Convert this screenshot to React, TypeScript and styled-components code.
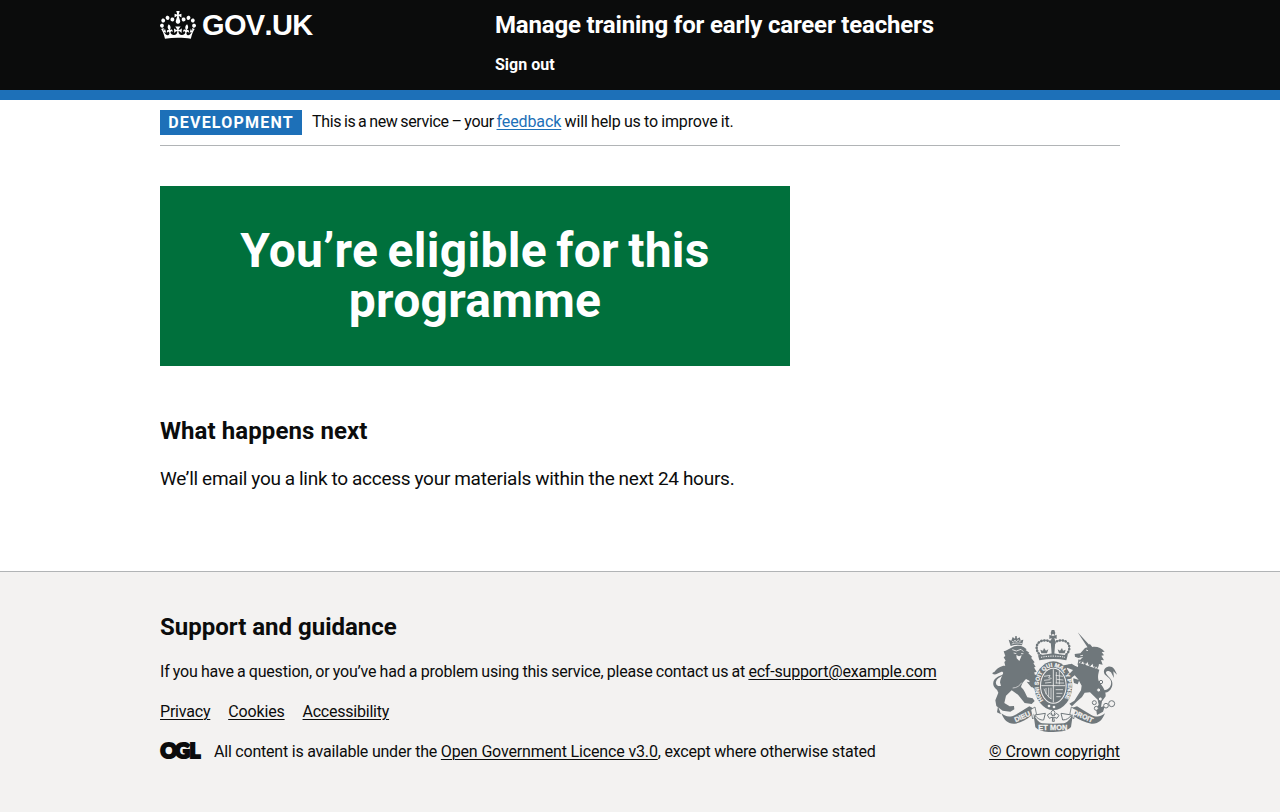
import React from "react";
import styled, { createGlobalStyle } from "styled-components";

const ink = "#0b0c0c";
const blue = "#1d70b8";
const crest = "#6f777b";
const paper = "#f3f2f1";

const GlobalStyle = createGlobalStyle`
  *, *::before, *::after { box-sizing: border-box; }
  html { background: ${paper}; }
  body {
    margin: 0;
    background: #fff;
    color: ${ink};
    font-family: Roboto, "Noto Sans", "Liberation Sans", sans-serif;
    -webkit-font-smoothing: antialiased;
  }
  h1, h2, p, ul { margin: 0; padding: 0; }
`;

const Container = styled.div`
  width: 960px;
  margin: 0 auto;
`;

const Header = styled.header`
  height: 100px;
  background: ${ink};
  border-bottom: 10px solid ${blue};
`;

const HeaderRow = styled(Container)`
  display: flex;
  padding-top: 10px;
`;

const LogoLink = styled.a`
  display: flex;
  align-items: flex-start;
  width: 335px;
  color: #fff;
  text-decoration: none;
`;

const Crown = styled.svg`
  margin-top: 1px;
  fill: #fff;
`;

const Logotype = styled.span`
  margin-left: 6px;
  font: 700 29px/30px "Liberation Sans", Arial, sans-serif;
  font-kerning: none;
  letter-spacing: -0.65px;
`;

const ServiceName = styled.a`
  display: block;
  color: #fff;
  font-size: 24px;
  font-weight: 700;
  line-height: 30px;
  letter-spacing: -0.17px;
  text-decoration: none;
`;

const SignOut = styled.a`
  display: block;
  margin-top: 15px;
  color: #fff;
  font-size: 16px;
  font-weight: 700;
  line-height: 20px;
  text-decoration: none;
`;

const PhaseBanner = styled.div`
  display: flex;
  align-items: flex-start;
  height: 46px;
  padding: 10px 0;
  border-bottom: 1px solid #b1b4b6;
`;

const Tag = styled.strong`
  width: 142px;
  height: 25px;
  margin-right: 10px;
  background: ${blue};
  color: #fff;
  font-size: 16px;
  line-height: 25px;
  letter-spacing: 1.2px;
  text-align: center;
`;

const BannerText = styled.span`
  font-size: 16px;
  line-height: 24px;
`;

const Tracked = styled.span<{ $letter: number; $word?: number }>`
  letter-spacing: ${(p) => p.$letter}px;
  word-spacing: ${(p) => p.$word ?? 0}px;
`;

const Link = styled.a<{ $tone?: string; $letter?: number }>`
  color: ${(p) => p.$tone ?? ink};
  letter-spacing: ${(p) => p.$letter ?? -0.2}px;
  text-decoration: underline;
  text-decoration-thickness: 1px;
  text-underline-offset: 1.6px;
`;

const Main = styled.main`
  padding: 40px 0 80px;
`;

const Panel = styled.div`
  width: 630px;
  height: 180px;
  padding: 40px;
  background: #00703c;
  color: #fff;
  text-align: center;
`;

const PanelTitle = styled.h1`
  font-size: 48px;
  font-weight: 700;
  line-height: 50px;
  letter-spacing: 0.3px;
  word-spacing: -3px;
`;

const NextHeading = styled.h2`
  margin: 50px 0 20px;
  font-size: 24px;
  line-height: 30px;
  letter-spacing: 0.08px;
`;

const Body = styled.p`
  font-size: 19px;
  line-height: 25px;
  letter-spacing: -0.25px;
  word-spacing: -0.35px;
`;

const Footer = styled.footer`
  height: 241px;
  padding-top: 40px;
  background: ${paper};
  border-top: 1px solid #b1b4b6;
  font-size: 16px;
  line-height: 20px;
`;

const FooterRow = styled(Container)`
  display: flex;
  justify-content: space-between;
  align-items: flex-end;
`;

const FooterHeading = styled.h2`
  margin-bottom: 20px;
  font-size: 24px;
  line-height: 30px;
`;

const FooterText = styled.p`
  margin-bottom: 20px;
  white-space: nowrap;
`;

const FooterLinks = styled.ul`
  display: flex;
  gap: 17.9px;
  margin-bottom: 20px;
  list-style: none;
`;

const Licence = styled.div`
  display: flex;
  white-space: nowrap;
`;

const OglMark = styled.svg`
  margin-right: 13px;
  overflow: visible;
`;

const Copyright = styled.div`
  display: flex;
  flex-direction: column;
  align-items: center;
  gap: 10px;
  width: 131px;
  white-space: nowrap;
`;

const CrownIcon = () => (
  <Crown width="36" height="28" viewBox="0 0 132 97" preserveAspectRatio="none" aria-hidden="true">
    <path d="M25 30.2c3.5 1.5 7.7-.2 9.1-3.7 1.5-3.6-.2-7.8-3.9-9.2-3.6-1.4-7.6.3-9.1 3.9-1.4 3.5.3 7.5 3.9 9zM9 39.5c3.6 1.5 7.8-.2 9.2-3.7 1.5-3.6-.2-7.8-3.9-9.1-3.6-1.5-7.6.2-9.1 3.8-1.4 3.5.3 7.5 3.8 9zM4.4 57.2c3.5 1.5 7.7-.2 9.1-3.8 1.5-3.6-.2-7.7-3.9-9.1-3.5-1.5-7.6.3-9.1 3.8-1.4 3.5.3 7.6 3.9 9.1zm38.3-21.4c3.5 1.5 7.7-.2 9.1-3.8 1.5-3.6-.2-7.7-3.9-9.1-3.6-1.5-7.6.3-9.1 3.8-1.3 3.6.4 7.7 3.9 9.1zm64.4-5.6c-3.6 1.5-7.8-.2-9.1-3.7-1.5-3.6.2-7.8 3.8-9.2 3.6-1.4 7.7.3 9.2 3.9 1.3 3.5-.4 7.5-3.9 9zm15.9 9.3c-3.6 1.5-7.7-.2-9.1-3.7-1.5-3.6.2-7.8 3.7-9.1 3.6-1.5 7.7.2 9.2 3.8 1.5 3.5-.3 7.5-3.8 9zm4.7 17.7c-3.6 1.5-7.8-.2-9.2-3.8-1.5-3.6.2-7.7 3.9-9.1 3.6-1.5 7.7.3 9.2 3.8 1.3 3.5-.4 7.6-3.9 9.1zM89.3 35.8c-3.6 1.5-7.8-.2-9.2-3.8-1.4-3.6.2-7.7 3.9-9.1 3.6-1.5 7.7.3 9.2 3.8 1.4 3.6-.3 7.7-3.9 9.1zM69.7 17.7l8.9 4.7V9.3l-8.9 2.8c-.2-.3-.5-.6-.9-.9L72.4 0H59.6l3.5 11.2c-.3.3-.6.5-.9.9l-8.8-2.8v13.1l8.8-4.7c.3.3.6.7.9.9l-5 15.4v.1c-.2.8-.4 1.6-.4 2.4 0 4.1 3.1 7.5 7 8.1h.2c.3 0 .7.1 1 .1.4 0 .7 0 1-.1h.2c4-.6 7.1-4.1 7.1-8.1 0-.8-.1-1.7-.4-2.4V34l-5.1-15.4c.4-.2.7-.6 1-.9zM66 92.8c16.9 0 32.8 1.1 47.1 3.2 4-16.9 8.9-26.7 14-33.5l-9.6-3.4c1 4.9 1.1 7.2 0 10.2-1.5-1.4-3-4.3-4.2-8.7L108.6 76c2.8-2 5-3.2 7.5-3.3-4.4 9.4-10 11.9-13.6 11.2-4.3-.8-6.3-4.6-5.6-7.9 1-4.7 5.7-5.9 8-.5 4.3-8.7-3-11.4-7.6-8.8 7.1-7.2 7.9-13.5 2.1-21.1-8 6.1-8.1 12.3-4.5 20.8-4.7-5.4-12.1-2.5-9.5 6.2 3.4-5.2 7.9-2 7.2 3.1-.6 4.3-6.4 7.8-13.5 7.2-10.3-.9-10.9-8-11.2-13.8 2.5-.5 7.1 1.8 11 7.3L80.2 60c-4.1 4.4-8 5.3-12.3 5.4 1.4-4.4 8-11.6 8-11.6H55.5s6.4 7.2 7.9 11.6c-4.2-.1-8-1-12.3-5.4l1.4 16.4c3.9-5.5 8.5-7.7 10.9-7.3-.3 5.8-.9 12.8-11.1 13.8-7.2.6-12.9-2.9-13.5-7.2-.7-5 3.8-8.3 7.1-3.1 2.7-8.7-4.6-11.6-9.4-6.2 3.7-8.5 3.6-14.7-4.6-20.8-5.8 7.6-5 13.9 2.2 21.1-4.7-2.6-11.9.1-7.7 8.8 2.3-5.5 7.1-4.2 8.1.5.7 3.3-1.3 7.1-5.7 7.9-3.5.7-9-1.8-13.5-11.2 2.5.1 4.7 1.3 7.5 3.3l-4.7-15.4c-1.2 4.4-2.7 7.2-4.3 8.7-1.1-3-.9-5.3 0-10.2l-9.5 3.4c5 6.9 9.9 16.7 14 33.5 14.8-2.1 30.8-3.2 47.7-3.2z" />
  </Crown>
);

const CrestIcon = () => (
  <svg width="125" height="102" viewBox="36 29 375 306" fill={crest} aria-hidden="true">
    {/* lion's tail */}
    <path d="M79 205C62 218 43 207 40 193c-3-16 14-25 24-28 9-3 6-13-1-10-8 3-14 8-22 7-6-1-4-6 2-7 6-9 14-15 25-18 11-2 20 4 18 13-3 15-34 18-38 34-3 13 13 18 25 8l10-9z" />
    {/* lion's crown */}
    <path d="M92 77l-6-19 8 3 4-11 7 5 1-8 4 0 1 8 8-4 3 9 8-2-4 17c-12-3-22-2-34 2z" />
    <path d="M95 71c10-4 21-4 31-1M96 62l4 4 5-7 4 6 6-7 4 6 5-4" fill="none" stroke={paper} strokeWidth="2" />
    {/* lion's mane, body and legs */}
    <path d="M94 82c9-7 27-8 37-2l9 7-3 2 11 8-3 2 12 11-4 2 11 14-4 2 7 12-5 1 8 14-7 1c2 12 3 25 9 34l-8 17-13-12-3-14-10-5c-8 8-14 17-15 24 10 8 14 22 19 31l16 3 6 8-9 9-21-3-20-25-19-13-17 16-5 22 16 10 13-1 1 10-12 7-23-3-19-14-3-17 9-23-5-11 14-5-4-15c3-18 12-29 18-39l-5-22 4-4-6-10 5-4-5-14 6-2z" />
    <path d="M97 88l12 4 14-5 7 7M101 98l8 2m14 0h7" fill="none" stroke={paper} strokeWidth="2.5" />
    <path d="M109 104l8 4 8-3-3 8-4 9-8-8z" fill={paper} />
    <path d="M98 203c13 0 22-8 27-16M80 250l6-22" fill="none" stroke={paper} strokeWidth="2" />
    <path d="M144 160l28 4 1 11-18-2zM140 184l31 4v11l-17 2zM55 252l-4 24 12 6-8-21z" />

    {/* unicorn's tail */}
    <path d="M363 207c12 7 27-1 30-15 3-15-9-20-16-27-10-10-5-23 7-26 14-3 21 8 27 24l-11-10 2 20-9-17c-8-7-17-5-15 3 3 9 22 17 19 35-3 18-19 29-36 20z" />
    {/* horn, head and mane */}
    <path d="M293 36l38 41-7 6zM301 99l14-16 10-3 4-10 8 10c15-2 27 3 37 14l-9 1 7 10-8 1 8 14-9-1 5 14-11-2-3 11-57-20 12-12-14 3-10-4-1-8z" />
    <path d="M318 89l6 2M301 106l8-1" fill="none" stroke={paper} strokeWidth="2.5" />
    <path d="M297 118l5 11 8-9 4 14 9-11 6 15 9-10 5 14 11-7-5 15-55-17z" fill={paper} stroke={crest} strokeWidth="3" />
    {/* unicorn's body and legs */}
    <path d="M302 129l56 19c-4 15-6 25 0 38 12 15 20 27 19 42l-11 15-3 17 12-4-6 18-18 10-3-19 8-12-3-15-23-22-16 1-8 13-17 15-13 13-8-8 15-9 20-31 2-14-11-20-10-11-13 10-8-9 16-17-18-7-1 9-9-2 1-14 16-3 26 8 1-12z" />
    <path d="M289 146c-12 0-22-5-29-11l15-5 14 9zM280 174l18 5-5 13-11-4-2-8z" />
    {/* garter */}
    <ellipse cx="220" cy="196" rx="57" ry="73" />
    <ellipse cx="220" cy="196" rx="40" ry="54" fill={paper} />
    <ellipse cx="220" cy="196" rx="37" ry="51" />
    <path d="M220 147v99M184 196h72" stroke={paper} strokeWidth="2.5" />
    <path d="M192 168l18-3-4 8 9 1M192 180l19-2m-16 10l19-2M227 165l22 3m-19 9l20 2m-23 9h25M229 155v34m9-37v40M192 205c5 13 10 24 22 31m-16-33v19m8-20v29m7-29v34M227 208h22m-20 11h18m-18 10h13" fill="none" stroke={paper} strokeWidth="2.2" />
    <path id="garter" d="M190 240A44 58 0 1 1 250 240" fill="none" />
    <text fill={paper} stroke={paper} strokeWidth=".7" fontFamily="Liberation Sans, sans-serif" fontWeight="700" fontSize="17">
      <textPath href="#garter" textLength="244" lengthAdjust="spacingAndGlyphs">HONI SOIT QUI MAL Y PENSE</textPath>
    </text>
    <circle cx="207" cy="257" r="4" fill={paper} />
    <circle cx="222" cy="260" r="4" fill={paper} />
    {/* royal crown */}
    <path d="M178 120l-4-15 15-2 30-4 29 4 15 2-4 15c-25-5-53-5-81 0z" />
    <path d="M183 106c-16-12-17-32-5-41 14-9 32-4 37 3m8 0c6-7 24-12 37-3 12 9 11 29-5 41" fill="none" stroke={crest} strokeWidth="7.5" strokeLinecap="round" strokeDasharray="1 8" />
    <path d="M183 106c-16-12-17-32-5-41 14-9 32-4 37 3m8 0c6-7 24-12 37-3 12 9 11 29-5 41" fill="none" stroke={crest} strokeWidth="2" />
    <path d="M215 53l-7 3v-13l7 3-3-8 3-9h8l3 9-3 8 7-3v13l-7-3 3 10-3 38h-8l-3-38zM192 83l6 8 7-4-4 12h-17l-3-11 8 3zM246 83l-6 8-7-4 4 12h17l3-11-8 3z" />
    <circle cx="219" cy="44" r="3" fill={paper} />
    <path d="M183 111c24-5 49-5 72 0" fill="none" stroke={paper} strokeWidth="3" strokeDasharray="4 3" />
    {/* motto scroll */}
    <path d="M64 279c11 10 26 13 41 5 14-8 28-17 43-26l10 5-3 22c-16 14-31 21-50 25-20 2-33-10-41-31zM375 279c-11 10-26 13-41 5-14-8-28-17-43-26l-16 5 3 22c19 14 37 22 56 25 20 2 33-10 41-31z" />
    <path d="M152 268l13-8 5 24-12 12zM287 268l-13-8-5 24 12 12z" fill={paper} stroke={crest} strokeWidth="2.5" />
    <path d="M160 279c8 19 18 29 27 30 20 2 44 2 64 0 9 0 20-11 28-30l-6 41c-10 11-25 14-53 15-27 1-43-3-54-14z" />
    <path d="M164 284l32-5-5 20c-11 1-19-5-27-15zM275 284l-32-5 5 20c12 0 20-6 27-15z" fill={paper} stroke={crest} strokeWidth="3" />
    <path d="M217 303l1-13-10 4-6-10 8-5 8 8-5-11 6-8 6 8-4 11 8-8 8 6-6 9-10-4 2 13z" fill={paper} stroke={crest} strokeWidth="3" />
    <g fill={paper} stroke={paper} strokeWidth=".8" fontFamily="Liberation Sans, sans-serif" fontWeight="700" fontSize="21">
      <text transform="translate(107 306) rotate(-24)" textLength="50">DIEU</text>
      <text x="175" y="330" fontSize="22" textLength="87">ET MON</text>
      <text transform="translate(277 281) rotate(24)" textLength="64" lengthAdjust="spacingAndGlyphs">DROIT</text>
    </g>
    {/* chain */}
    <g fill={paper} stroke={crest} strokeWidth="3">
      <circle cx="356" cy="209" r="6" />
      <circle cx="363" cy="185" r="5" />
      <circle cx="343" cy="247" r="6" />
      <circle cx="349" cy="264" r="6" />
      <circle cx="361" cy="236" r="6" />
      <circle cx="378" cy="256" r="7" />
      <circle cx="395" cy="250" r="9" />
    </g>
  </svg>
);

export default function App() {
  return (
    <>
      <GlobalStyle />
      <Header>
        <HeaderRow>
          <LogoLink>
            <CrownIcon />
            <Logotype>GOV.UK</Logotype>
          </LogoLink>
          <div>
            <ServiceName>Manage training for early career teachers</ServiceName>
            <SignOut>Sign out</SignOut>
          </div>
        </HeaderRow>
      </Header>
      <Container>
        <PhaseBanner>
          <Tag>DEVELOPMENT</Tag>
          <BannerText>
            <Tracked $letter={-0.35} $word={-0.85}>This is a new service – your </Tracked>
            <Link $tone={blue} $letter={-0.1}>feedback</Link>
            <Tracked $letter={-0.15} $word={-0.5}> will help us to improve it.</Tracked>
          </BannerText>
        </PhaseBanner>
        <Main>
          <Panel>
            <PanelTitle>You’re eligible for this programme</PanelTitle>
          </Panel>
          <NextHeading>What happens next</NextHeading>
          <Body>We’ll email you a link to access your materials within the next 24 hours.</Body>
        </Main>
      </Container>
      <Footer>
        <FooterRow>
          <div>
            <FooterHeading>Support and guidance</FooterHeading>
            <FooterText>
              <Tracked $letter={-0.2} $word={-0.45}>
                If you have a question, or you’ve had a problem using this service, please contact us at{" "}
              </Tracked>
              <Link>ecf-support@example.com</Link>
            </FooterText>
            <FooterLinks>
              <li><Link>Privacy</Link></li>
              <li><Link $letter={-0.14}>Cookies</Link></li>
              <li><Link $letter={-0.23}>Accessibility</Link></li>
            </FooterLinks>
            <Licence>
              <OglMark width="41" height="18" viewBox="0 0 41 18" aria-hidden="true">
                <text x="0.4 15 29.6" y="16" fontFamily="Lato, sans-serif" fontWeight="900" fontSize="20.5" fill={ink} stroke={ink} strokeWidth="2.2">OGL</text>
              </OglMark>
              <Tracked $letter={-0.21}>
                All content is available under the <Link $letter={-0.15}>Open Government Licence v3.0</Link>, except where otherwise stated
              </Tracked>
            </Licence>
          </div>
          <Copyright>
            <CrestIcon />
            <Link $letter={-0.1}>© Crown copyright</Link>
          </Copyright>
        </FooterRow>
      </Footer>
    </>
  );
}
